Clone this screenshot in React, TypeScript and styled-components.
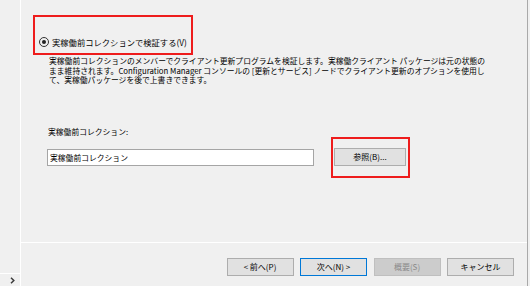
import React from "react";
import styled, { createGlobalStyle } from "styled-components";

const GlobalStyle = createGlobalStyle`
  html, body {
    margin: 0;
    padding: 0;
    background: #f0f0f0;
  }
  body {
    font-family: "Noto Sans CJK JP", "Noto Sans", sans-serif;
    color: #000;
  }
`;

// whole wizard page
const Page = styled.div`
  display: flex;
  width: 530px;
  height: 286px;
  background: #f0f0f0;
  font-size: 8px;
  overflow: hidden;
`;

// narrow strip on the left with the collapse arrow
const Sidebar = styled.div`
  width: 20px;
  border-right: 1px solid #ffffff;
  display: flex;
  flex-direction: column;
  justify-content: flex-end;
`;

const SidebarFoot = styled.div`
  height: 12px;
  border-top: 1px solid #ffffff;
  display: flex;
  align-items: center;
  justify-content: flex-end;
  padding-right: 5px;
`;

const Main = styled.div`
  flex: 1;
  display: flex;
  flex-direction: column;
  border-right: 1px solid #a9a9a9;
  margin-right: 2px;
`;

const Content = styled.div`
  height: 242px;
  padding: 15px 0 0 12px;
  box-sizing: border-box;
`;

// red annotation boxes from the screenshot
const Highlight = styled.div<{ $pad: string; $w: number; $h: number }>`
  width: ${(p) => p.$w}px;
  height: ${(p) => p.$h}px;
  flex-shrink: 0;
  border: 2px solid #ee1c1c;
  box-sizing: border-box;
  padding: ${(p) => p.$pad};
  display: flex;
  align-items: center;
`;

const RadioRow = styled.label`
  display: flex;
  align-items: center;
  gap: 3px;
  line-height: 12px;
  font-size: 8.3px;
  white-space: nowrap;
`;

const Radio = styled.span`
  width: 10px;
  height: 10px;
  flex-shrink: 0;
  border-radius: 50%;
  border: 1px solid #333;
  box-sizing: border-box;
  display: flex;
  align-items: center;
  justify-content: center;
  &::after {
    content: "";
    width: 4px;
    height: 4px;
    border-radius: 50%;
    background: #222;
  }
`;

const Description = styled.p`
  margin: 1px 0 0 16px;
  line-height: 9.6px;
  font-size: 7.8px;
  white-space: nowrap;
`;

const Line = styled.span`
  display: block;
`;

const FieldLabel = styled.div`
  margin: 42px 0 0 15px;
  line-height: 10px;
  font-size: 7.8px;
`;

const FieldRow = styled.div`
  display: flex;
  align-items: center;
  margin-left: 14px;
`;

const TextBox = styled.div`
  width: 267px;
  height: 17px;
  box-sizing: border-box;
  border: 1px solid #a5a5a5;
  background: #ffffff;
  padding: 0 2px;
  line-height: 15px;
  font-size: 7.8px;
  margin-right: 17px;
`;

const Button = styled.button<{ $variant?: "default" | "primary" | "disabled" }>`
  width: ${(p) => (p.$variant === undefined ? "72px" : "67px")};
  height: 18px;
  flex-shrink: 0;
  box-sizing: border-box;
  padding: 0;
  font-family: inherit;
  font-size: 8px;
  line-height: 16px;
  color: ${(p) => (p.$variant === "disabled" ? "#8a8a8a" : "#000")};
  background: ${(p) => (p.$variant === "disabled" ? "#cccccc" : "#e1e1e1")};
  border: 1px solid
    ${(p) =>
      p.$variant === "primary"
        ? "#0078d7"
        : p.$variant === "disabled"
        ? "#bfbfbf"
        : "#adadad"};
  box-shadow: ${(p) =>
    p.$variant === "primary" ? "inset 0 0 0 1px #e1e1e1" : "none"};
`;

const Separator = styled.div`
  height: 1px;
  background: #ffffff;
`;

const Footer = styled.div`
  flex: 1;
  display: flex;
  justify-content: flex-end;
  align-items: flex-start;
  gap: 6.5px;
  padding: 15px 13px 0 0;
`;

function Chevron() {
  return (
    <svg width="5" height="7" viewBox="0 0 5 7">
      <path d="M1 0.8 L3.8 3.5 L1 6.2" fill="none" stroke="#3c3c3c" strokeWidth="1.5" />
    </svg>
  );
}

export default function App() {
  return (
    <>
      <GlobalStyle />
      <Page>
        <Sidebar>
          <SidebarFoot>
            <Chevron />
          </SidebarFoot>
        </Sidebar>
        <Main>
          <Content>
            <Highlight $pad="19px 2px 5px 4px" $w={160} $h={40}>
              <RadioRow>
                <Radio />
                実稼働前コレクションで検証する(V)
              </RadioRow>
            </Highlight>
            <Description>
              <Line>
                実稼働前コレクションのメンバーでクライアント更新プログラムを検証します。実稼働クライアント パッケージは元の状態の
              </Line>
              <Line>
                まま維持されます。Configuration Manager コンソールの [更新とサービス] ノードでクライアント更新のオプションを使用し
              </Line>
              <Line>て、実稼働パッケージを後で上書きできます。</Line>
            </Description>
            <FieldLabel>実稼働前コレクション:</FieldLabel>
            <FieldRow>
              <TextBox>実稼働前コレクション</TextBox>
              <Highlight $pad="9px 2px 9px 1px" $w={79} $h={41}>
                <Button>参照(B)...</Button>
              </Highlight>
            </FieldRow>
          </Content>
          <Separator />
          <Footer>
            <Button $variant="default">&lt; 前へ(P)</Button>
            <Button $variant="primary">次へ(N) &gt;</Button>
            <Button $variant="disabled">概要(S)</Button>
            <Button $variant="default">キャンセル</Button>
          </Footer>
        </Main>
      </Page>
    </>
  );
}
